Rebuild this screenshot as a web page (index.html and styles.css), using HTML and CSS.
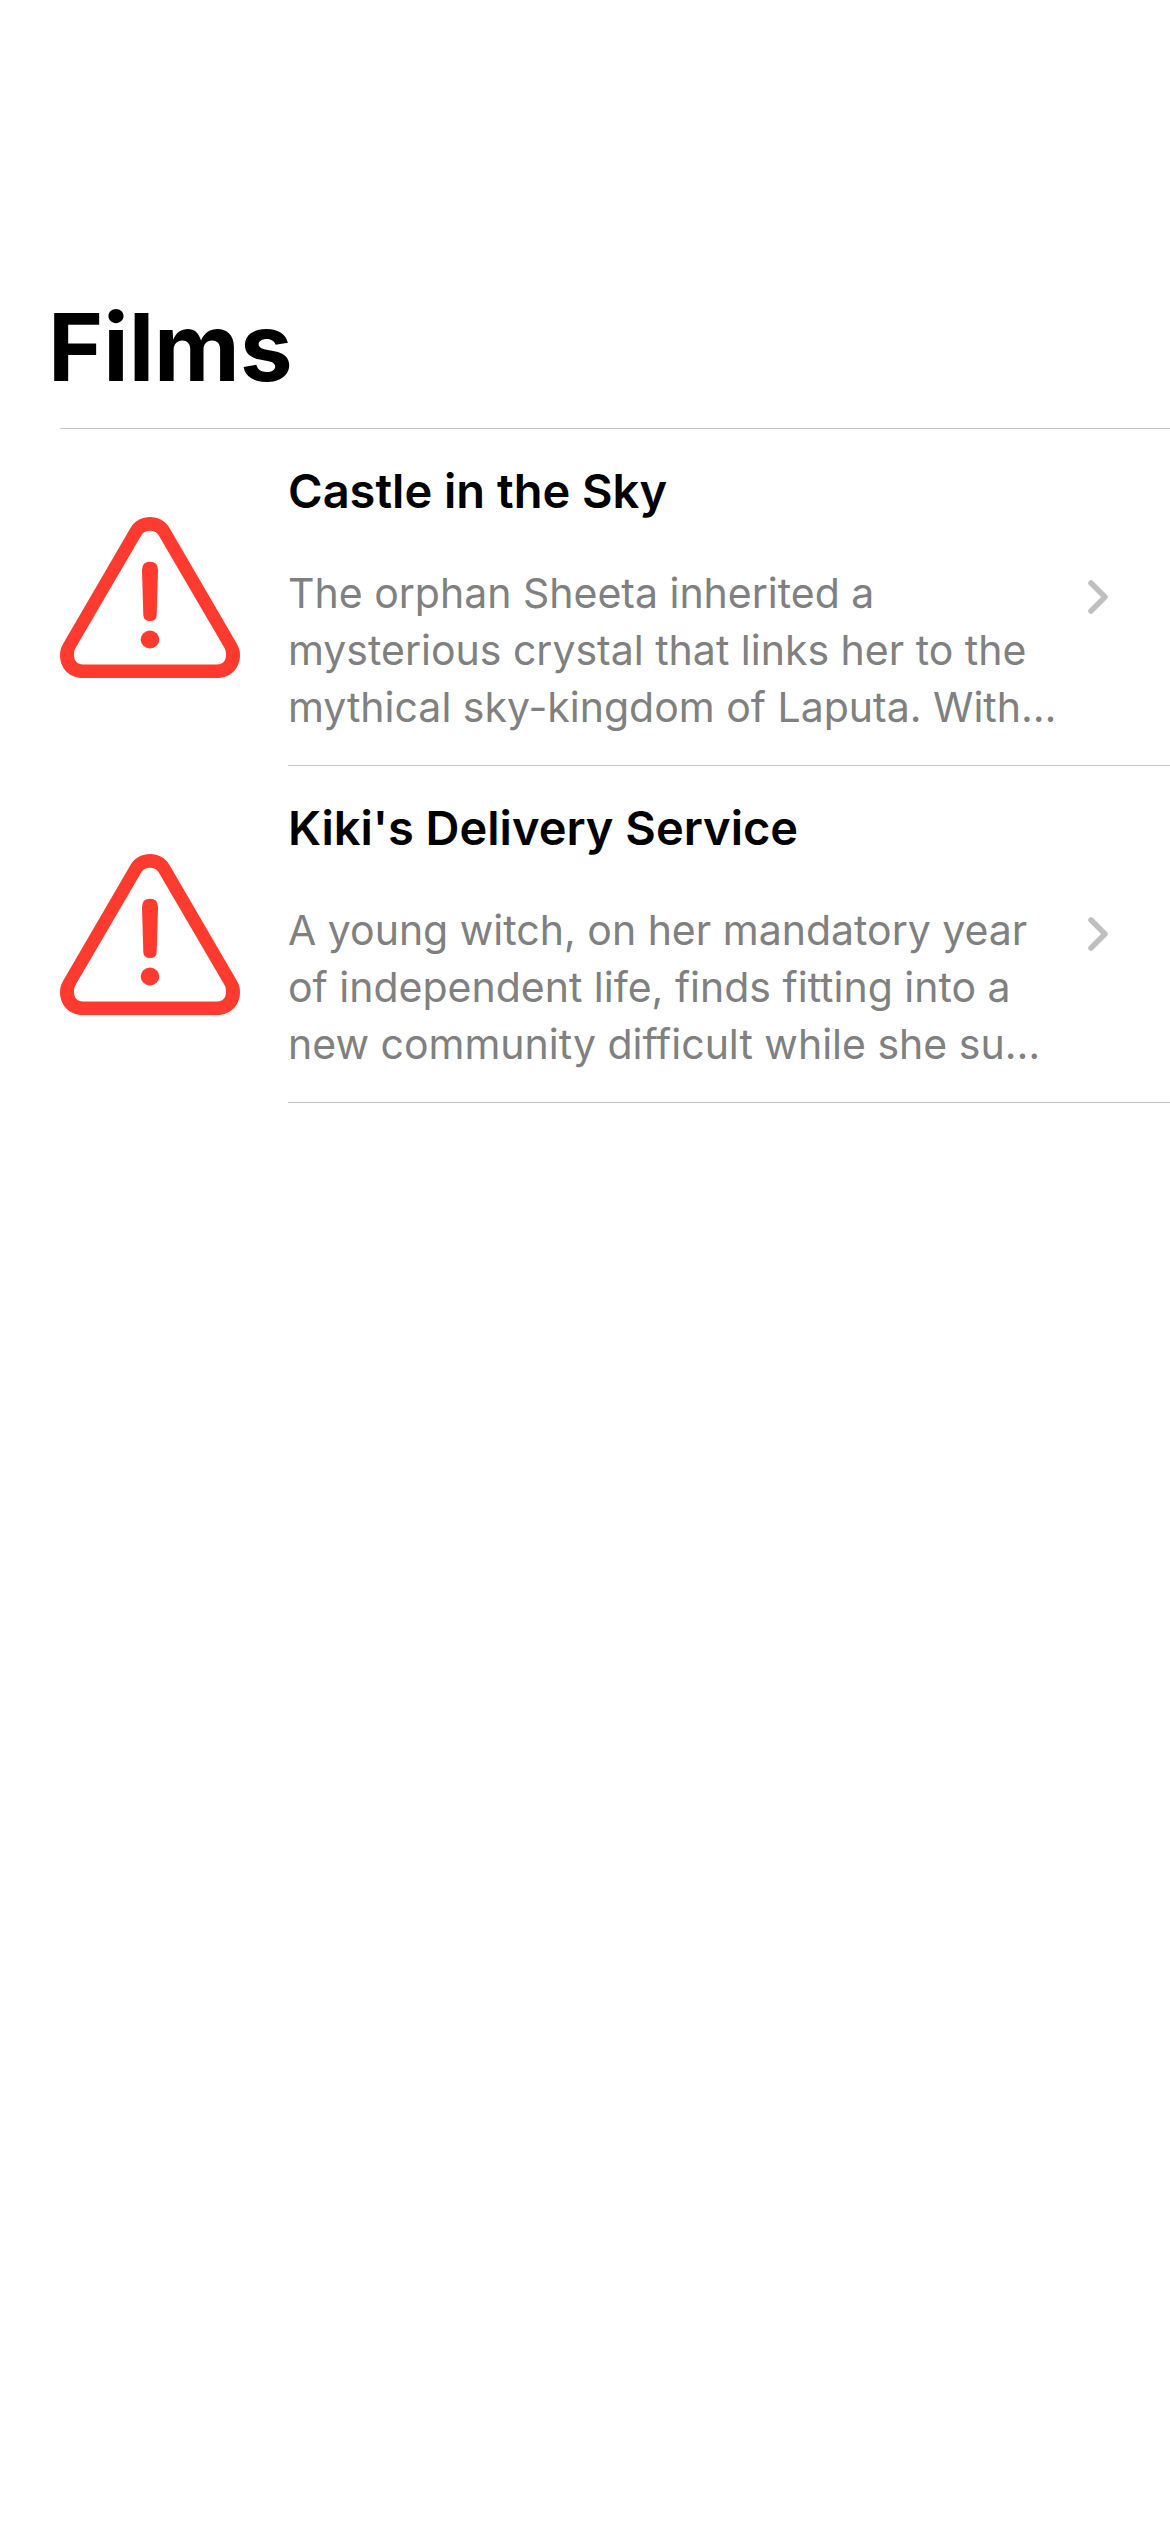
FILE: index.html
```html
<!DOCTYPE html>
<html lang="en">
<head>
<meta charset="utf-8">
<meta name="viewport" content="width=device-width, initial-scale=1">
<title>Films</title>
<link rel="stylesheet" href="styles.css">
</head>
<body>
<svg class="symbols" aria-hidden="true">
  <symbol id="warning" viewBox="0 0 180 161">
    <path fill="currentColor" fill-rule="evenodd" d="M70.500 11C75 3.500 82 0 90 0S105 3.500 109.500 11L177 127C179 130.500 180 134 180 138C180 151 171 161 157 161H23C9 161 0 151 0 138C0 134 1 130.500 3 127ZM81.500 18C83.500 15 86.500 13.700 90 13.700S96.500 15 98.500 18L164.500 131C165.700 133 166 135.500 166 138C166 143.500 163 147.500 157 147.500H23C17 147.500 14 143.500 14 138C14 135.500 14.300 133 15.500 131Z"/>
    <path fill="currentColor" d="M82 53Q82 44.700 90 44.700T98 53L96.700 98Q96.500 104 90 104T83.300 98Z"/>
    <ellipse cx="90" cy="122.500" rx="9.300" ry="9" fill="currentColor"/>
  </symbol>
  <symbol id="chevron" viewBox="0 0 20 34">
    <path d="M3 3L17 17L3 31" fill="none" stroke="currentColor" stroke-width="5.500" stroke-linecap="round" stroke-linejoin="round"/>
  </symbol>
</svg>
<main class="page">
  <h1 class="page-title">Films</h1>
  <ul class="film-list">
    <li>
      <a class="film" href="#castle">
        <svg class="poster" role="img" aria-label="Image unavailable"><use href="#warning"/></svg>
        <div class="film-body">
          <div class="film-text">
            <h2 class="film-title">Castle in the Sky</h2>
            <p class="film-summary">The orphan Sheeta inherited a<br>mysterious crystal that links her to the<br>mythical sky-kingdom of Laputa. With…</p>
          </div>
          <svg class="chevron" aria-hidden="true"><use href="#chevron"/></svg>
        </div>
      </a>
    </li>
    <li>
      <a class="film" href="#kiki">
        <svg class="poster" role="img" aria-label="Image unavailable"><use href="#warning"/></svg>
        <div class="film-body">
          <div class="film-text">
            <h2 class="film-title">Kiki's Delivery Service</h2>
            <p class="film-summary">A young witch, on her mandatory year<br>of independent life, finds fitting into a<br>new community difficult while she su…</p>
          </div>
          <svg class="chevron" aria-hidden="true"><use href="#chevron"/></svg>
        </div>
      </a>
    </li>
  </ul>
</main>
</body>
</html>
```
FILE: styles.css
```css
* {
  box-sizing: border-box;
  margin: 0;
  padding: 0;
}

body {
  background: #fff;
  color: #000;
  font-family: Inter, "Liberation Sans", sans-serif;
}

.symbols {
  display: block;
  width: 0;
  height: 0;
}

.page {
  padding-top: 283px;
}

.page-title {
  padding-left: 48px;
  font-size: 94px;
  font-weight: 700;
  line-height: 128px;
}

.film-list {
  margin-top: 17px;
  list-style: none;
}

.film-list::before {
  content: "";
  display: block;
  height: 1px;
  margin-left: 60px;
  background: #c6c6c8;
}

.film {
  display: flex;
  align-items: center;
  gap: 48px;
  padding-left: 60px;
  color: inherit;
  text-decoration: none;
}

.poster {
  flex: none;
  width: 180px;
  height: 161px;
  color: #ff3b30;
}

.film-body {
  display: flex;
  flex: 1;
  align-items: center;
  justify-content: space-between;
  min-width: 0;
  min-height: 337px;
  padding-right: 62px;
  border-bottom: 1px solid #c6c6c8;
}

.film-text {
  padding: 33px 0 29px;
}

.film-title {
  margin-bottom: 45px;
  font-size: 47px;
  font-weight: 600;
  line-height: 58px;
}

.film-summary {
  color: #808080;
  font-size: 41px;
  line-height: 57px;
  white-space: nowrap;
}

.chevron {
  flex: none;
  width: 20px;
  height: 34px;
  color: #bfbfc0;
}
```
